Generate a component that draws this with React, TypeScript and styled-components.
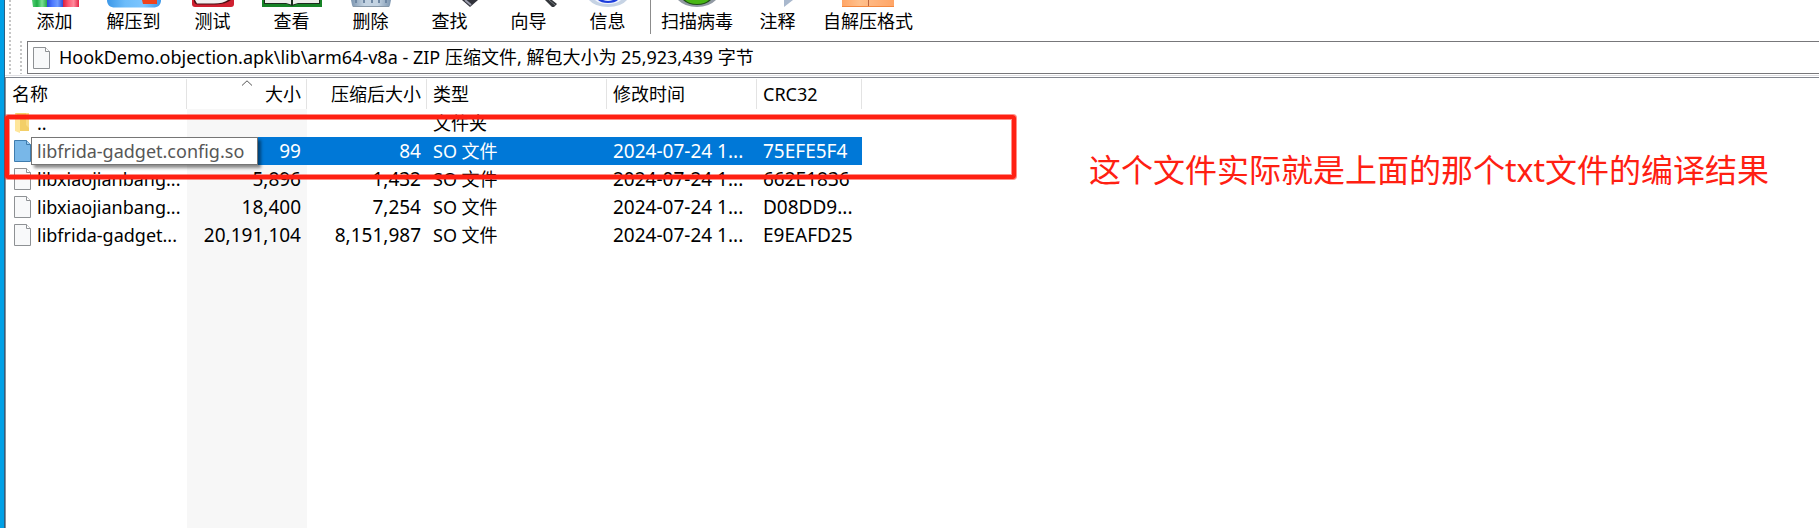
import React from 'react';
import styled, { createGlobalStyle } from 'styled-components';

const GlobalStyle = createGlobalStyle`
  * { box-sizing: border-box; }
  body {
    margin: 0;
    background: #fff;
    color: #000;
    font: 400 18px/24px "Noto Sans", "Noto Sans CJK SC", sans-serif;
    overflow: hidden;
  }
`;

const Desktop = styled.div`
  min-height: 100vh;
  display: flex;
  padding-left: 4px;
  background: #00a0e6;
`;

const Window = styled.main`
  flex: 1;
  min-width: 0;
  display: flex;
  flex-direction: column;
  border-left: 1px solid #2b5f82;
  background: #fff;
`;

const Bars = styled.div`
  display: flex;
  border-bottom: 1px solid #dedee2;
`;

const Grip = styled.span`
  flex: none;
  width: 2px;
  margin-left: 4px;
  background: repeating-linear-gradient(to bottom, #c6c6c6 0 2px, transparent 2px 4px);
`;

const BarStack = styled.div`
  flex: 1;
  min-width: 0;
  display: flex;
  flex-direction: column;
`;

const Toolbar = styled.div`
  display: flex;
  align-items: flex-start;
  height: 41px;
  padding-left: 4px;
`;

const ToolButton = styled.button<{ $width?: number }>`
  width: ${(p) => p.$width ?? 79}px;
  padding: 0;
  border: 0;
  background: none;
  color: inherit;
  font: inherit;
  white-space: nowrap;
  display: flex;
  flex-direction: column;
  align-items: center;
  gap: 1px;
`;

const ToolArt = styled.svg`
  display: block;
  width: 60px;
  height: 8px;
`;

const Divider = styled.span`
  width: 1px;
  height: 34px;
  margin: 0 5px 0 3px;
  background: #8c8c8c;
`;

const AddressBar = styled.div`
  display: flex;
  padding-bottom: 1px;
  padding-left: 5px;
`;

const AddressBox = styled.label`
  flex: 1;
  min-width: 0;
  height: 33px;
  margin-left: 5px;
  padding-left: 5px;
  display: flex;
  align-items: center;
  gap: 9px;
  border: 1px solid #77777a;
  border-right: 0;
`;

const AddressInput = styled.input`
  flex: 1;
  min-width: 0;
  height: 30px;
  padding: 0 0 4px;
  border: 0;
  outline: 0;
  background: none;
  color: inherit;
  font: inherit;
`;

const ListPanel = styled.section`
  position: relative;
  flex: 1;
  margin-top: 1px;
  border-top: 1px solid #82868f;
  border-left: 1px solid #8a8f98;
  background: linear-gradient(#f7f7f7, #f7f7f7) 181px 0 / 120px 100% no-repeat #fff;
`;

const FileTable = styled.table`
  width: 856px;
  table-layout: fixed;
  border-collapse: separate;
  border-spacing: 0;
`;

const Col = styled.col<{ $width: number }>`
  width: ${(p) => p.$width}px;
`;

const HeadCell = styled.th<{ $right?: boolean }>`
  position: relative;
  height: 31px;
  padding: 0 6px;
  background: linear-gradient(#e3e3e3, #e3e3e3) right 1px / 1px 30px no-repeat #fff;
  font-weight: 400;
  text-align: ${(p) => (p.$right ? 'right' : 'left')};
  white-space: nowrap;
`;

const SortMark = styled.svg`
  position: absolute;
  top: 2px;
  left: 50%;
  width: 12px;
  height: 6px;
  margin-left: -6px;
`;

const Row = styled.tr<{ $selected?: boolean }>`
  height: 28px;
  color: ${(p) => (p.$selected ? '#fff' : 'inherit')};
  --row-fill: ${(p) => (p.$selected ? '#0078d7' : 'transparent')};
`;

const Cell = styled.td<{ $right?: boolean }>`
  padding: 0 6px;
  background: var(--row-fill);
  text-align: ${(p) => (p.$right ? 'right' : 'left')};
  white-space: nowrap;
`;

const DataCell = styled(Cell)`
  font-size: 19px;
`;

const NameCell = styled.td`
  padding: 0 0 0 8px;
`;

const NameBox = styled.div`
  position: relative;
  display: flex;
  align-items: center;
`;

const NameLabel = styled.span`
  flex: 1;
  height: 28px;
  padding-left: 6px;
  line-height: 28px;
  background: var(--row-fill);
  white-space: nowrap;
`;

const Icon = styled.svg`
  flex: none;
  display: block;
  width: 17px;
  height: 22px;
`;

const Tooltip = styled.span`
  position: absolute;
  top: 0;
  left: 17px;
  height: 28px;
  width: 227px;
  padding-left: 5px;
  border: 1px solid #767676;
  background: #fff;
  color: #575757;
  line-height: 26px;
  white-space: nowrap;
  box-shadow: 3px 3px 3px rgba(0, 0, 0, 0.45);
`;

const Highlight = styled.div`
  position: absolute;
  top: 37px;
  left: -1px;
  width: 1011px;
  height: 64px;
  border: 4px solid #ff2012;
  border-radius: 3px;
  box-shadow: 0 0 0 1px rgba(255, 32, 18, 0.5), inset 0 0 0 1px rgba(255, 32, 18, 0.5);
`;

const Note = styled.p`
  position: absolute;
  top: 68px;
  left: 1083px;
  margin: 0;
  color: #ff2012;
  font-size: 32px;
  line-height: 48px;
  white-space: nowrap;
`;

function FileIcon({ selected }: { selected?: boolean }) {
  const line = selected ? '#3f7cae' : '#8e9194';
  return (
    <Icon viewBox="0 0 17 22" aria-hidden="true">
      <path d="M.5.5h12l4 4v17H.5z" fill={selected ? '#78b7e8' : '#f8f9fa'} stroke={line} />
      <path d="M12.5.5v4h4" fill={selected ? '#9fcdf0' : '#fff'} stroke={line} />
    </Icon>
  );
}

function FolderIcon() {
  return (
    <Icon viewBox="0 0 17 22" aria-hidden="true">
      <path d="M1 1h11l3 3v15H1z" fill="#f3cf68" />
      <path d="M1 1l5 4v16l-5-2z" fill="#ffe69b" />
      <path d="M12 1v12l3 3V1z" fill="#f9dc86" />
    </Icon>
  );
}

const art: Record<string, React.ReactNode> = {
  添加: (
    <>
      <path d="M7 0h15v7H8z" fill="url(#g-green)" />
      <path d="M22 0h16v7H22z" fill="url(#g-blue)" />
      <path d="M38 0h16v7H38z" fill="url(#g-red)" />
    </>
  ),
  解压到: (
    <>
      <path d="M3 0h54c0 5-3 7.500-8 7.500H11C6 7.500 3 5 3 0z" fill="url(#g-sky)" />
      <path d="M38 0h15v4H39z" fill="#f0431c" />
    </>
  ),
  测试: (
    <>
      <path d="M9 0h42v4q0 3-3 3H12q-3 0-3-3z" fill="#cf2030" />
      <path d="M11 0h37q-5 4-15 4.500H14q-3-1-3-4z" fill="#4a1014" />
      <path d="M12 0h33q-5 3.500-14 3.500H14z" fill="#f3f0f0" />
    </>
  ),
  查看: (
    <>
      <path d="M0 0h60v7H0z" fill="#168326" />
      <path d="M2 0h56v4H35l-5 2-5-2H2z" fill="#1c2c1d" />
      <path d="M3 0h26v4.500l-5-1.500H3zM31 0h26v3H36l-5 1.500z" fill="#eceeea" />
    </>
  ),
  删除: (
    <>
      <path d="M10 0h40l-1 5q0 2-2 2H13q-2 0-2-2z" fill="url(#g-steel)" />
      <path d="M15 0v3M23 0v3M31 0v3M38 0v3M45 0v3" stroke="#6f88a4" strokeWidth="2" />
      <path d="M12 6.500h36" stroke="#8798a8" />
    </>
  ),
  查找: (
    <>
      <path d="M42 0h16l-8 7z" fill="#30313a" />
      <path d="M45 0l6 5" stroke="#9a9cab" strokeWidth="2" />
    </>
  ),
  向导: (
    <>
      <path d="M46 0h7l5 4-3 3h-2z" fill="#33363a" />
      <path d="M50 0l6 5" stroke="#777c80" />
    </>
  ),
  信息: (
    <>
      <path d="M11 0h38Q43 7 30 7T11 0z" fill="#c6d3e4" />
      <path d="M17 0h26Q39 4 30 4T17 0z" fill="#f0f4ff" />
      <path d="M20 0h20Q37 3 30 3T20 0z" fill="#1c3cdb" />
      <path d="M25 0h10q-5 2-10 0z" fill="#dce5ff" />
    </>
  ),
  扫描病毒: (
    <>
      <path d="M11 0h38Q42 7 30 7T11 0z" fill="#9199a3" />
      <path d="M16 0h28Q39 5 30 5T16 0z" fill="#1e4d14" />
      <path d="M18 0h24Q38 4 30 4T18 0z" fill="#48b613" />
    </>
  ),
  注释: <path d="M36 0h9l-9 7z" fill="#a9b8cd" />,
  自解压格式: (
    <>
      <path d="M4 0h52v7H4z" fill="url(#g-orange)" />
      <path d="M30.500 0v7" stroke="#b9643f" />
      <path d="M4 6.500h52" stroke="#f3883f" />
    </>
  ),
};

function Tool({ name, width }: { name: string; width?: number }) {
  return (
    <ToolButton type="button" $width={width}>
      <ToolArt viewBox="0 0 60 8" aria-hidden="true">
        {art[name]}
      </ToolArt>
      {name}
    </ToolButton>
  );
}

const Defs = styled.svg`
  position: absolute;
  width: 0;
  height: 0;
`;

function Gradients() {
  const across: [string, string[]][] = [
    ['g-green', ['#57d077', '#1fae45', '#7be093', '#27a84b']],
    ['g-blue', ['#2747d8', '#4d79ff', '#6f9bff', '#2a4fdc']],
    ['g-red', ['#d91f3f', '#ff5a74', '#ff8a9b', '#e42346']],
    ['g-sky', ['#3d98e8', '#6cbcfa', '#7cc6ff', '#3d98e8']],
    ['g-steel', ['#7d96b0', '#c3d3e2', '#c3d3e2', '#7d96b0']],
    ['g-orange', ['#ffa566', '#ffc08c', '#ffb27a', '#ffa566']],
  ];
  return (
    <Defs aria-hidden="true">
      <defs>
        {across.map(([id, stops]) => (
          <linearGradient id={id} key={id}>
            {stops.map((c, i) => (
              <stop key={i} offset={i / 3} stopColor={c} />
            ))}
          </linearGradient>
        ))}
      </defs>
    </Defs>
  );
}

const files = [
  { name: 'libfrida-gadget.config.so', size: '99', packed: '84', crc: '75EFE5F4', selected: true },
  { name: 'libxiaojianbang...', size: '5,896', packed: '1,432', crc: '662E1836' },
  { name: 'libxiaojianbang...', size: '18,400', packed: '7,254', crc: 'D08DD9...' },
  { name: 'libfrida-gadget...', size: '20,191,104', packed: '8,151,987', crc: 'E9EAFD25' },
];

export default function App() {
  return (
    <Desktop>
      <GlobalStyle />
      <Gradients />
      <Window>
        <Bars>
          <Grip />
          <BarStack>
            <Toolbar>
              {['添加', '解压到', '测试', '查看', '删除', '查找', '向导', '信息'].map((n) => (
                <Tool key={n} name={n} />
              ))}
              <Divider />
              <Tool name="扫描病毒" width={82} />
              <Tool name="注释" />
              <Tool name="自解压格式" width={102} />
            </Toolbar>
            <AddressBar>
              <Grip />
              <AddressBox>
                <FileIcon />
                <AddressInput
                  aria-label="路径"
                  defaultValue="HookDemo.objection.apk\lib\arm64-v8a - ZIP 压缩文件, 解包大小为 25,923,439 字节"
                />
              </AddressBox>
            </AddressBar>
          </BarStack>
        </Bars>
        <ListPanel>
          <FileTable>
            <colgroup>
              <Col $width={181} />
              <Col $width={120} />
              <Col $width={120} />
              <Col $width={180} />
              <Col $width={150} />
              <Col $width={105} />
            </colgroup>
            <thead>
              <tr>
                <HeadCell>名称</HeadCell>
                <HeadCell $right>
                  <SortMark viewBox="0 0 12 6" aria-hidden="true">
                    <path d="M1 5.500L6 .8l5 4.700" fill="none" stroke="#555" />
                  </SortMark>
                  大小
                </HeadCell>
                <HeadCell $right>压缩后大小</HeadCell>
                <HeadCell>类型</HeadCell>
                <HeadCell>修改时间</HeadCell>
                <HeadCell>CRC32</HeadCell>
              </tr>
            </thead>
            <tbody>
              <Row>
                <NameCell>
                  <NameBox>
                    <FolderIcon />
                    <NameLabel>..</NameLabel>
                  </NameBox>
                </NameCell>
                <Cell />
                <Cell />
                <Cell>文件夹</Cell>
                <Cell />
                <Cell />
              </Row>
              {files.map((f) => (
                <Row key={f.crc} $selected={f.selected}>
                  <NameCell>
                    <NameBox>
                      <FileIcon selected={f.selected} />
                      {f.selected ? (
                        <>
                          <NameLabel />
                          <Tooltip role="tooltip">{f.name}</Tooltip>
                        </>
                      ) : (
                        <NameLabel>{f.name}</NameLabel>
                      )}
                    </NameBox>
                  </NameCell>
                  <DataCell $right>{f.size}</DataCell>
                  <DataCell $right>{f.packed}</DataCell>
                  <Cell>SO 文件</Cell>
                  <DataCell>2024-07-24 1...</DataCell>
                  <DataCell>{f.crc}</DataCell>
                </Row>
              ))}
            </tbody>
          </FileTable>
          <Highlight />
          <Note>这个文件实际就是上面的那个txt文件的编译结果</Note>
        </ListPanel>
      </Window>
    </Desktop>
  );
}
